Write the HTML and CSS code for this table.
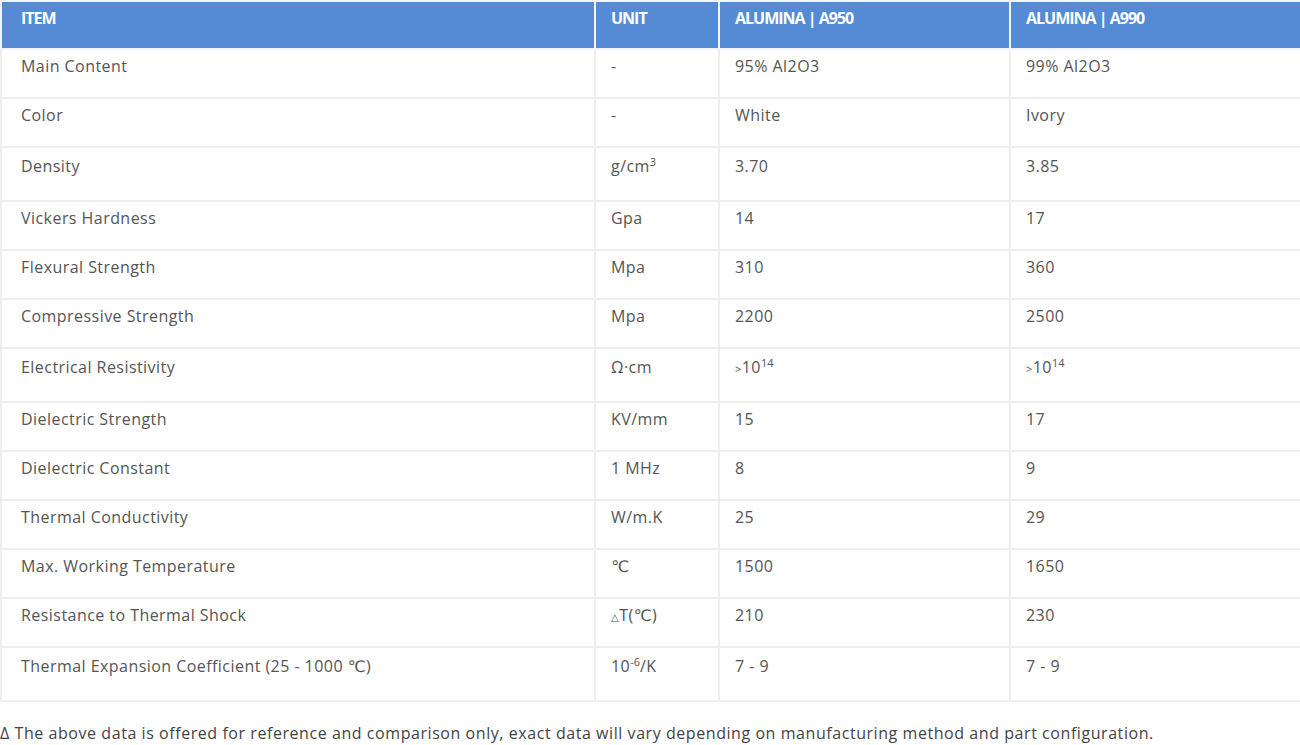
FILE: index.html
```html
<!DOCTYPE html>
<html>
<head>
<meta charset="utf-8">
<link rel="stylesheet" href="styles.css">
</head>
<body>
<table class="spec">
  <colgroup>
    <col class="c1"><col class="c2"><col class="c3"><col class="c4">
  </colgroup>
  <thead>
    <tr><th class="first">ITEM</th><th>UNIT</th><th>ALUMINA | A950</th><th>ALUMINA | A990</th></tr>
  </thead>
  <tbody>
    <tr><td class="first">Main Content</td><td>-</td><td>95% Al2O3</td><td>99% Al2O3</td></tr>
    <tr><td class="first">Color</td><td>-</td><td>White</td><td>Ivory</td></tr>
    <tr class="tall"><td class="first">Density</td><td>g/cm<sup>3</sup></td><td>3.70</td><td>3.85</td></tr>
    <tr><td class="first">Vickers Hardness</td><td>Gpa</td><td>14</td><td>17</td></tr>
    <tr><td class="first">Flexural Strength</td><td>Mpa</td><td>310</td><td>360</td></tr>
    <tr><td class="first">Compressive Strength</td><td>Mpa</td><td>2200</td><td>2500</td></tr>
    <tr class="tall"><td class="first">Electrical Resistivity</td><td>Ω·cm</td><td><span class="gt">&gt;</span>10<sup>14</sup></td><td><span class="gt">&gt;</span>10<sup>14</sup></td></tr>
    <tr><td class="first">Dielectric Strength</td><td>KV/mm</td><td>15</td><td>17</td></tr>
    <tr><td class="first">Dielectric Constant</td><td>1 MHz</td><td>8</td><td>9</td></tr>
    <tr><td class="first">Thermal Conductivity</td><td>W/m.K</td><td>25</td><td>29</td></tr>
    <tr><td class="first">Max. Working Temperature</td><td>℃</td><td>1500</td><td>1650</td></tr>
    <tr><td class="first">Resistance to Thermal Shock</td><td><span class="delta">△</span>T(℃)</td><td>210</td><td>230</td></tr>
    <tr class="tall"><td class="first">Thermal Expansion Coefficient (25 - 1000 ℃)</td><td>10<sup>-6</sup>/K</td><td>7 - 9</td><td>7 - 9</td></tr>
  </tbody>
</table>
<p class="note">Δ The above data is offered for reference and comparison only, exact data will vary depending on manufacturing method and part configuration.</p>
</body>
</html>
```
FILE: styles.css
```css
html, body {
  margin: 0;
  padding: 0;
  background: #fff;
}
body {
  font-family: "Open Sans", "DejaVu Sans", sans-serif;
  font-size: 16px;
  letter-spacing: 0.45px;
  color: #555;
}
.spec {
  width: 1300px;
  border-collapse: collapse;
  table-layout: fixed;
}
.c1 { width: 594px; }
.c2 { width: 124px; }
.c3 { width: 291px; }
.c4 { width: 291px; }
.spec th, .spec td {
  border: 2px solid #eeeeee;
  text-align: left;
  vertical-align: top;
  padding: 5px 15px 20px;
  height: 22px;
  line-height: 22px;
  white-space: nowrap;
}
.spec th.first, .spec td.first { padding-left: 19px; }
.spec .tall td {
  padding-top: 7px;
  padding-bottom: 23px;
}
.spec th {
  background: #548bd4;
  color: #fff;
  font-weight: 700;
  letter-spacing: -1px;
  padding-top: 5px;
  padding-bottom: 19px;
  border-color: #f2f4f8;
}
.spec sup {
  font-size: 11px;
  line-height: 0;
  vertical-align: 6px;
  letter-spacing: 0;
}
.gt {
  font-size: 11px;
  line-height: 0;
}
.delta {
  font-size: 10px;
  line-height: 0;
}
.note {
  margin: 20px 0 0;
  line-height: 22px;
  letter-spacing: 0.56px;
  color: #444;
}
```
